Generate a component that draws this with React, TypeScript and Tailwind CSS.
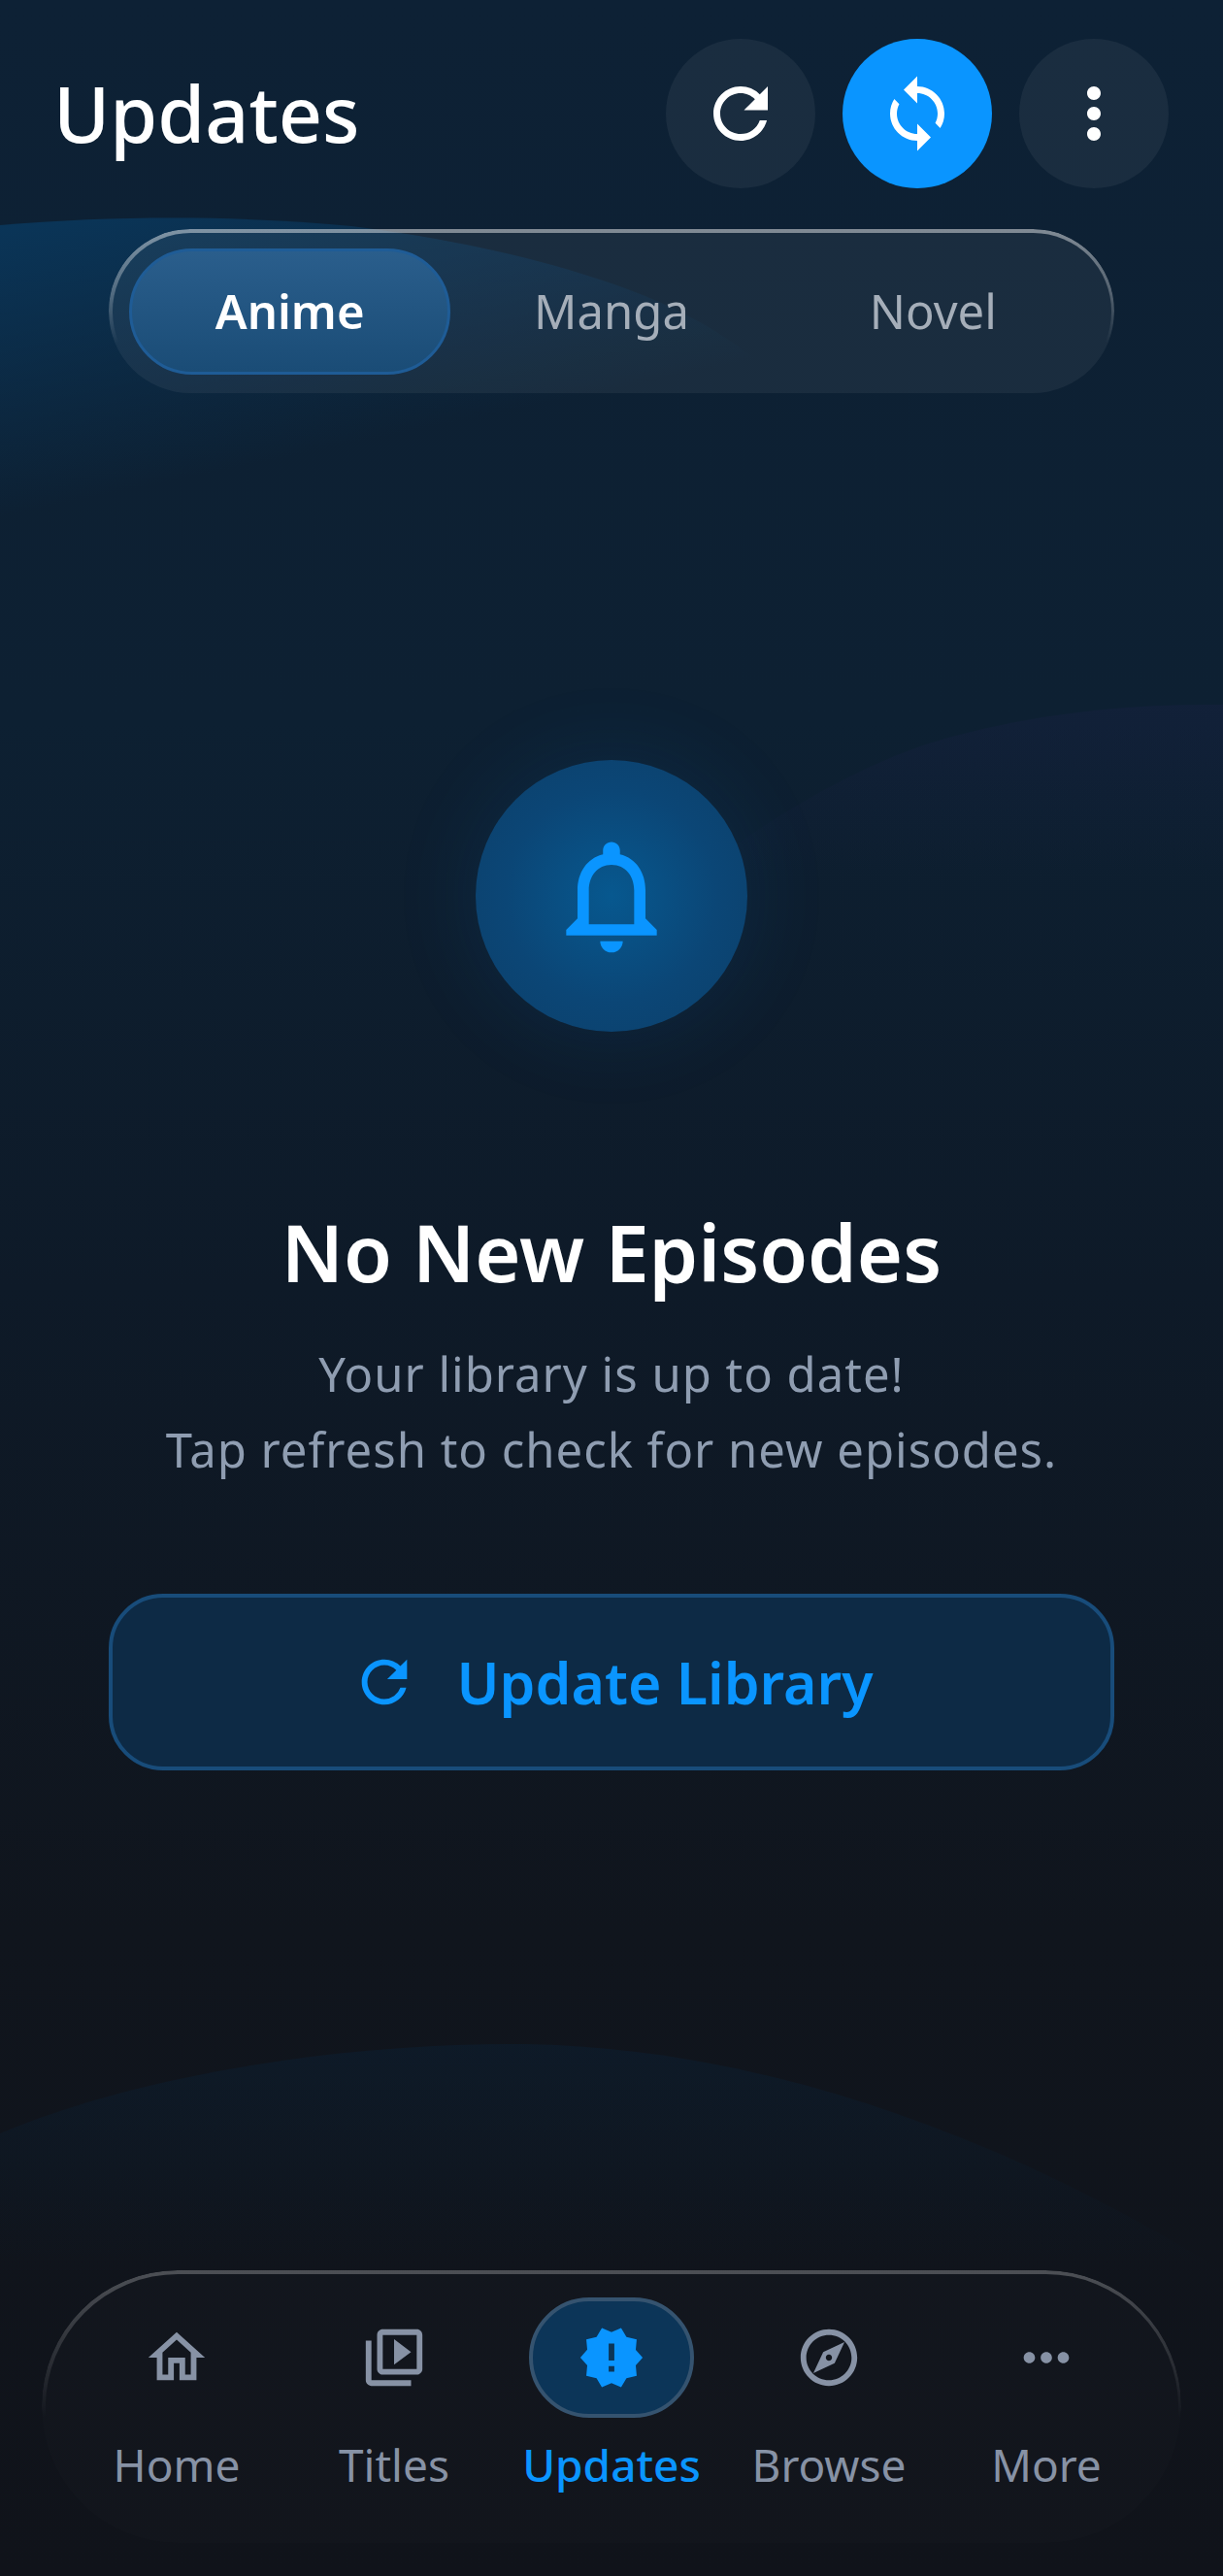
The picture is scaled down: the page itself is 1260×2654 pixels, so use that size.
import {
  MdRefresh,
  MdSync,
  MdMoreVert,
  MdNotificationsNone,
  MdOutlineHome,
  MdOutlineVideoLibrary,
  MdNewReleases,
  MdOutlineExplore,
  MdMoreHoriz,
} from 'react-icons/md'

const tabs = ['Anime', 'Manga', 'Novel']

const navItems = [
  { label: 'Home', icon: MdOutlineHome },
  { label: 'Titles', icon: MdOutlineVideoLibrary },
  { label: 'Updates', icon: MdNewReleases, active: true },
  { label: 'Browse', icon: MdOutlineExplore },
  { label: 'More', icon: MdMoreHoriz },
]

function Waves() {
  return (
    <svg className="pointer-events-none absolute inset-0" width="1260" height="2654" viewBox="0 0 1260 2654">
      <defs>
        <linearGradient id="waveTop" x1="0" y1="232" x2="60" y2="520" gradientUnits="userSpaceOnUse">
          <stop offset="0" stopColor="#0a3558" />
          <stop offset="1" stopColor="#0a3558" stopOpacity="0" />
        </linearGradient>
        <linearGradient id="waveRight" x1="0" y1="725" x2="0" y2="900" gradientUnits="userSpaceOnUse">
          <stop offset="0" stopColor="#1a2145" stopOpacity="0.35" />
          <stop offset="1" stopColor="#1a2145" stopOpacity="0" />
        </linearGradient>
        <linearGradient id="waveBottom" x1="0" y1="2105" x2="0" y2="2340" gradientUnits="userSpaceOnUse">
          <stop offset="0" stopColor="#0b2136" stopOpacity="0.45" />
          <stop offset="1" stopColor="#0b2136" stopOpacity="0" />
        </linearGradient>
      </defs>
      <path d="M0 232C120 222 250 222 362 233C500 250 640 285 723 333C790 372 860 430 940 560L0 560Z" fill="url(#waveTop)" />
      <path d="M720 900C780 850 880 790 960 765C1060 735 1160 725 1260 726L1260 900Z" fill="url(#waveRight)" />
      <path d="M0 2198C150 2135 360 2105 540 2106C800 2110 1050 2210 1260 2340L0 2340Z" fill="url(#waveBottom)" />
    </svg>
  )
}

function GlassEdge({ className }: { className: string }) {
  return (
    <span
      className={`pointer-events-none absolute inset-0 p-[3.5px] [mask:linear-gradient(#000_0_0)_content-box_exclude,linear-gradient(#000_0_0)] ${className}`}
    />
  )
}

export default function App() {
  return (
    <div className="relative flex h-[2654px] w-[1260px] flex-col overflow-hidden bg-[linear-gradient(180deg,#0d2135_0%,#0d2032_28%,#0e1a28_50%,#10151d_75%,#10131a_100%)] font-['Noto_Sans',sans-serif]">
      <Waves />

      <header className="relative flex items-center justify-between pl-[55px] pr-[56px] pt-[40px]">
        <h1 className="text-[79px] font-medium leading-[154px] text-white">Updates</h1>
        <div className="flex gap-[28px]">
          <button className="flex h-[154px] w-[154px] items-center justify-center rounded-full bg-white/[0.055] text-white">
            <MdRefresh size={84} />
          </button>
          <button className="flex h-[154px] w-[154px] items-center justify-center rounded-full bg-[#0a95ff] text-white">
            <MdSync size={84} />
          </button>
          <button className="flex h-[154px] w-[154px] items-center justify-center rounded-full bg-white/[0.055] text-white">
            <MdMoreVert size={84} />
          </button>
        </div>
      </header>

      <div className="relative mx-[112px] mt-[42px] grid h-[169px] grid-cols-3 items-center rounded-[84px] bg-white/[0.055] px-[21px]">
        <GlassEdge className="rounded-[84px] bg-gradient-to-b from-white/45 via-white/25 via-40% to-transparent to-70%" />
        {tabs.map((tab, i) => (
          <div
            key={tab}
            className={
              i === 0
                ? 'flex h-[130px] items-center justify-center rounded-[65px] border-[3.5px] border-[#1f5c96] bg-gradient-to-b from-[#2a5e8c] to-[#1a4c76] text-[49px] font-semibold text-white'
                : 'flex h-[130px] items-center justify-center text-[49px] text-[#a5aeb9]'
            }
          >
            {tab}
          </div>
        ))}
      </div>

      <div className="relative mx-auto mt-[378px] flex h-[280px] w-[280px] items-center justify-center rounded-full bg-[radial-gradient(circle,#07588f_0%,#0b4676_55%,#0c3f69_100%)] text-[#0a95ff] shadow-[0_0_90px_rgba(10,120,220,0.12)]">
        <MdNotificationsNone size={140} />
      </div>

      <h2 className="relative mt-[177px] text-center text-[81px] font-semibold leading-[100px] text-white">
        No New Episodes
      </h2>
      <p className="relative mt-[36px] text-center text-[49px] leading-[78px] tracking-[1px] text-[#8f9db1]">
        Your library is up to date!
        <br />
        Tap refresh to check for new episodes.
      </p>

      <button className="relative mx-[112px] mt-[110px] flex h-[182px] items-center justify-center gap-[40px] rounded-[56px] border-4 border-[#184c7a] bg-[#0d2a45] text-[#0a95ff]">
        <MdRefresh size={70} />
        <span className="text-[59px] font-semibold">Update Library</span>
      </button>

      <nav className="relative mx-[43px] mb-[34px] mt-auto grid h-[281px] grid-cols-5 rounded-[140px] bg-white/[0.012] px-[27px]">
        <GlassEdge className="rounded-[140px] bg-gradient-to-b from-white/25 via-white/10 via-35% to-transparent to-55%" />
        {navItems.map((item) => {
          const Icon = item.icon
          return (
            <div key={item.label} className="relative flex flex-col items-center pt-[28px]">
              <div
                className={
                  item.active
                    ? 'flex h-[124px] w-[170px] items-center justify-center rounded-[62px] border-4 border-[#35536f] bg-[#0c3558] text-[#0a95ff]'
                    : 'flex h-[124px] w-[170px] items-center justify-center text-[#8792a5]'
                }
              >
                <Icon size={70} />
              </div>
              <span
                className={
                  item.active
                    ? 'mt-[13px] text-[46px] font-medium leading-[70px] text-[#0a95ff]'
                    : 'mt-[13px] text-[46px] leading-[70px] text-[#8792a5]'
                }
              >
                {item.label}
              </span>
            </div>
          )
        })}
      </nav>
    </div>
  )
}
